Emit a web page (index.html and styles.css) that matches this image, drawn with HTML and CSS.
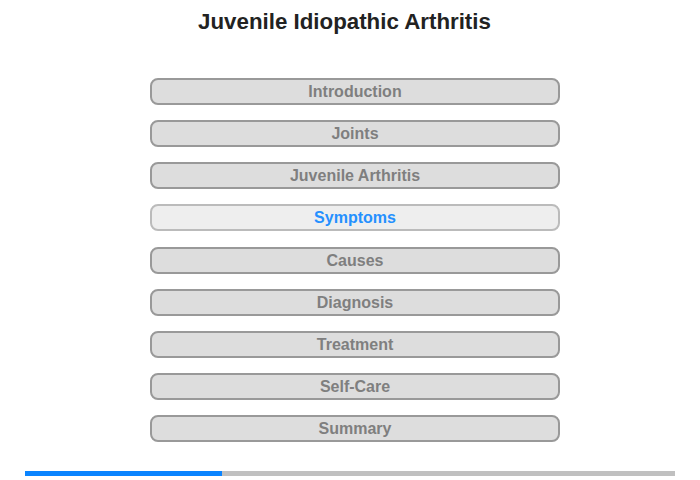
FILE: index.html
```html
<!DOCTYPE html>
<html>
<head>
<meta charset="utf-8">
<link rel="stylesheet" href="styles.css">
</head>
<body>
<div class="page">
  <h1 class="title">Juvenile Idiopathic Arthritis</h1>
  <nav class="menu">
    <div class="item">Introduction</div>
    <div class="item">Joints</div>
    <div class="item">Juvenile Arthritis</div>
    <div class="item active">Symptoms</div>
    <div class="item">Causes</div>
    <div class="item">Diagnosis</div>
    <div class="item">Treatment</div>
    <div class="item">Self-Care</div>
    <div class="item">Summary</div>
  </nav>
  <div class="progress"><div class="progress-fill"></div></div>
</div>
</body>
</html>
```
FILE: styles.css
```css
html, body {
  margin: 0;
  padding: 0;
  background: #fff;
}
.page {
  width: 700px;
  height: 480px;
  display: flex;
  flex-direction: column;
  font-family: "Liberation Sans", Arial, sans-serif;
}
.title {
  margin: 0;
  padding: 10px 11px 0 0;
  font-size: 22.3px;
  line-height: 24px;
  font-weight: bold;
  color: #222;
  text-align: center;
}
.menu {
  margin-top: 44px;
  margin-left: 150px;
  width: 410px;
  display: flex;
  flex-direction: column;
  gap: 15.125px;
}
.item {
  box-sizing: border-box;
  height: 27px;
  border: 2px solid #999;
  border-radius: 8px;
  background: #ddd;
  color: #7f7f7f;
  font-size: 16px;
  font-weight: bold;
  line-height: 21px;
  padding-top: 1px;
  padding-bottom: 1px;
  text-align: center;
}
.item.active {
  background: #eee;
  border-color: #bbb;
  color: #2590ff;
}
.progress {
  margin: auto 25px 4px 25px;
  height: 5px;
  background: #c0c0c0;
}
.progress-fill {
  width: 197px;
  height: 100%;
  background: #0a84ff;
}
```
